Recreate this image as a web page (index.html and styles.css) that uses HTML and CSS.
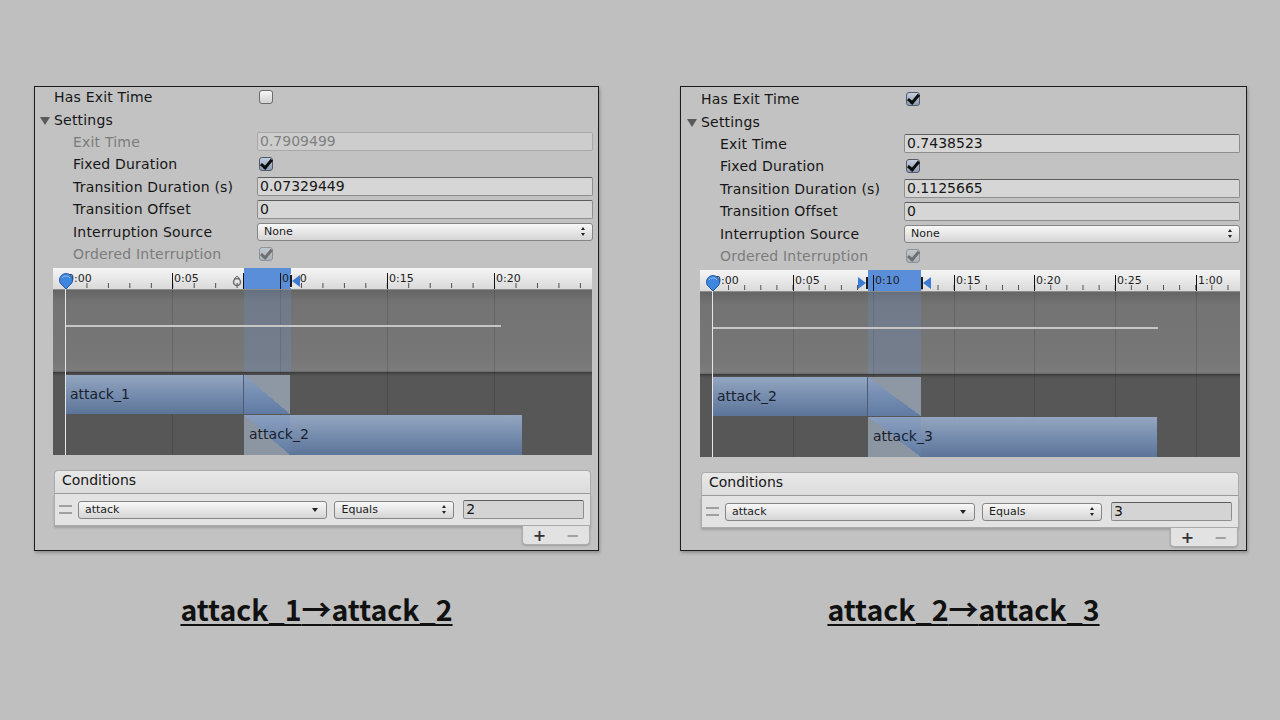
FILE: index.html
```html
<!DOCTYPE html>
<html lang="ja">
<head>
  <meta charset="UTF-8">
  <title>Transition settings</title>
  <link rel="stylesheet" href="styles.css">
</head>
<body>
  <div class="page">

    <div class="shot">
      <div class="panel">
        <div class="row"><span class="label">Has Exit Time</span><span class="check"></span></div>
        <div class="row foldout"><span class="label"><i class="tri"></i>Settings</span></div>
        <div class="row sub off"><span class="label">Exit Time</span><span class="field">0.7909499</span></div>
        <div class="row sub"><span class="label">Fixed Duration</span><span class="check on"></span></div>
        <div class="row sub"><span class="label">Transition Duration (s)</span><span class="field">0.07329449</span></div>
        <div class="row sub"><span class="label">Transition Offset</span><span class="field">0</span></div>
        <div class="row sub"><span class="label">Interruption Source</span><span class="popup">None<i class="updown"></i></span></div>
        <div class="row sub off"><span class="label">Ordered Interruption</span><span class="check on"></span></div>

        <div class="timeline tl-a">
          <div class="ruler"><div class="ticks"></div></div>
          <div class="upper"></div>
          <div class="lower"></div>
          <div class="grid" style="left:119px"></div>
          <div class="grid" style="left:227px"></div>
          <div class="grid" style="left:334px"></div>
          <div class="grid" style="left:441px"></div>
          <div class="xfade-top" style="left:191px;width:47px"></div>
          <div class="xfade" style="left:191px;width:47px"></div>
          <div class="major" style="left:119px"></div><span class="tlabel" style="left:121px">0:05</span>
          <div class="major" style="left:227px"></div><span class="tlabel" style="left:229px">0:10</span>
          <div class="major" style="left:334px"></div><span class="tlabel" style="left:336px">0:15</span>
          <div class="major" style="left:441px"></div><span class="tlabel" style="left:443px">0:20</span>
          <span class="tlabel" style="left:14px">0:00</span>
          <div class="major" style="left:190px"></div>
          <svg class="mark" style="left:179px" width="10" height="14" viewBox="0 0 10 14"><circle cx="5" cy="8" r="3.5" fill="none" stroke="#6f6f6f" stroke-width="1.5"/><path d="M2 5l3-3 3 3" fill="none" stroke="#6f6f6f"/></svg>
          <svg class="mark solid" style="left:237px" width="10" height="14" viewBox="0 0 10 14"><path d="M1 1v12" stroke="#1a1a1a" stroke-width="2"/><path d="M2 7l8-6v12z" fill="#3b7bd4"/></svg>
          <div class="curve" style="width:436px"></div>
          <div class="clip" style="left:12px;top:107px;width:225px"><i class="fade-out" style="width:46px"></i><span>attack_1</span></div>
          <div class="clip" style="left:191px;top:147px;width:278px;height:40px"><i class="fade-in" style="width:46px"></i><span>attack_2</span></div>
          <div class="playhead"></div>
          <svg class="pin" width="16" height="17" viewBox="0 0 16 17"><path d="M8 16L2.2 10A6.5 6.5 0 1 1 13.8 10z" fill="#3f86de" stroke="#1d56a8"/><path d="M4 5a4.5 4 0 0 1 8 0" fill="none" stroke="#8fc0f5"/></svg>
        </div>

        <div class="conditions">
          <div class="cond-head">Conditions</div>
          <div class="cond-body">
            <i class="handle"></i>
            <span class="popup param">attack<i class="down"></i></span>
            <span class="popup mode">Equals<i class="updown"></i></span>
            <span class="field value">2</span>
          </div>
          <div class="cond-foot"><b>+</b><b class="dim">−</b></div>
        </div>
      </div>
      <div class="caption">attack_1<span class="arrow">→</span>attack_2</div>
    </div>

    <div class="shot shot-b">
      <div class="panel panel-b">
        <div class="row"><span class="label">Has Exit Time</span><span class="check on"></span></div>
        <div class="row foldout"><span class="label"><i class="tri"></i>Settings</span></div>
        <div class="row sub"><span class="label">Exit Time</span><span class="field">0.7438523</span></div>
        <div class="row sub"><span class="label">Fixed Duration</span><span class="check on"></span></div>
        <div class="row sub"><span class="label">Transition Duration (s)</span><span class="field">0.1125665</span></div>
        <div class="row sub"><span class="label">Transition Offset</span><span class="field">0</span></div>
        <div class="row sub"><span class="label">Interruption Source</span><span class="popup">None<i class="updown"></i></span></div>
        <div class="row sub off"><span class="label">Ordered Interruption</span><span class="check on"></span></div>

        <div class="timeline tl-b">
          <div class="ruler"><div class="ticks"></div></div>
          <div class="upper"></div>
          <div class="lower"></div>
          <div class="grid" style="left:93px"></div>
          <div class="grid" style="left:173px"></div>
          <div class="grid" style="left:254px"></div>
          <div class="grid" style="left:334px"></div>
          <div class="grid" style="left:415px"></div>
          <div class="grid" style="left:496px"></div>
          <div class="xfade-top" style="left:168px;width:53px"></div>
          <div class="xfade" style="left:168px;width:53px"></div>
          <div class="major" style="left:93px"></div><span class="tlabel" style="left:95px">0:05</span>
          <div class="major" style="left:173px"></div><span class="tlabel" style="left:175px">0:10</span>
          <div class="major" style="left:254px"></div><span class="tlabel" style="left:256px">0:15</span>
          <div class="major" style="left:334px"></div><span class="tlabel" style="left:336px">0:20</span>
          <div class="major" style="left:415px"></div><span class="tlabel" style="left:417px">0:25</span>
          <div class="major" style="left:496px"></div><span class="tlabel" style="left:498px">1:00</span>
          <span class="tlabel" style="left:14px">0:00</span>
          <svg class="mark" style="left:158px" width="10" height="14" viewBox="0 0 10 14"><path d="M0 1l8 6-8 6z" fill="#3b7bd4"/><path d="M9 1v12" stroke="#1a1a1a" stroke-width="2"/></svg>
          <svg class="mark" style="left:221px" width="10" height="14" viewBox="0 0 10 14"><path d="M1 1v12" stroke="#1a1a1a" stroke-width="2"/><path d="M2 7l8-6v12z" fill="#3b7bd4"/></svg>
          <div class="curve" style="width:446px"></div>
          <div class="clip" style="left:12px;top:107px;width:209px"><i class="fade-out" style="width:53px"></i><span>attack_2</span></div>
          <div class="clip" style="left:168px;top:147px;width:289px;height:40px"><i class="fade-in" style="width:53px"></i><span>attack_3</span></div>
          <div class="playhead"></div>
          <svg class="pin" width="16" height="17" viewBox="0 0 16 17"><path d="M8 16L2.2 10A6.5 6.5 0 1 1 13.8 10z" fill="#3f86de" stroke="#1d56a8"/><path d="M4 5a4.5 4 0 0 1 8 0" fill="none" stroke="#8fc0f5"/></svg>
        </div>

        <div class="conditions">
          <div class="cond-head">Conditions</div>
          <div class="cond-body">
            <i class="handle"></i>
            <span class="popup param">attack<i class="down"></i></span>
            <span class="popup mode">Equals<i class="updown"></i></span>
            <span class="field value">3</span>
          </div>
          <div class="cond-foot"><b>+</b><b class="dim">−</b></div>
        </div>
      </div>
      <div class="caption">attack_2<span class="arrow">→</span>attack_3</div>
    </div>

  </div>
</body>
</html>
```

FILE: styles.css
```css
body { margin: 0; background: #bfbfbf; font-family: "DejaVu Sans", sans-serif; font-size: 14px; color: #161616; }
.page { display: flex; gap: 81px; padding: 86px 0 0 34px; }
.shot { width: 565px; display: flex; flex-direction: column; }
.shot-b { width: 567px; }

.panel { height: 465px; box-sizing: border-box; border: 1px solid #1c1c1c; background: #c2c2c2; box-shadow: 1px 2px 3px rgba(0,0,0,0.25); padding-top: 0; }
.panel > .row:first-child { margin-top: -1px; }
.panel-b { padding: 2px 0 0 1px; }

.row { display: grid; grid-template-columns: 222px 336px; align-items: center; height: 22.4px; }
.label { padding-left: 19px; white-space: nowrap; letter-spacing: 0.2px; }
.sub .label { padding-left: 38px; }
.off .label { color: #7c7c7c; }
.foldout .label { position: relative; }
.tri { position: absolute; left: 5px; top: 5px; width: 0; height: 0; border-left: 5px solid transparent; border-right: 5px solid transparent; border-top: 8px solid #5a5a5a; }

.field { display: block; height: 19px; box-sizing: border-box; border: 1px solid #8e8e8e; border-top-color: #5c5c5c; border-radius: 2px; background: #d6d6d6; padding-left: 2px; line-height: 17px; font-size: 14px; }
.off .field { color: #808080; border-color: #a9a9a9; background: #cdcdcd; }

.check { display: block; width: 14px; height: 14px; box-sizing: border-box; margin-left: 2px; border: 1px solid #6c6c6c; border-radius: 3px; background: linear-gradient(#f6f6f6, #d2d2d2); position: relative; }
.check.on { background: linear-gradient(#c3cedd, #8d9cb3); border-color: #505a68; }
.check.on::after { content: ""; position: absolute; left: 3px; top: -1px; width: 4px; height: 9px; border: solid #0c0c0c; border-width: 0 3px 3px 0; transform: rotate(40deg); }
.off .check { opacity: 0.45; }

.popup { display: flex; align-items: center; justify-content: space-between; height: 18px; box-sizing: border-box; border: 1px solid #858585; border-radius: 3px; background: linear-gradient(#f8f8f8, #d5d5d5); font-size: 11px; padding: 0 6px 0 6px; color: #1c1c1c; }
.updown { width: 5px; height: 9px; position: relative; }
.updown::before, .updown::after { content: ""; position: absolute; left: 0; border-left: 2.5px solid transparent; border-right: 2.5px solid transparent; }
.updown::before { top: 0; border-bottom: 3.5px solid #222; }
.updown::after { bottom: 0; border-top: 3.5px solid #222; }
.down { width: 0; height: 0; border-left: 3px solid transparent; border-right: 3px solid transparent; border-top: 4px solid #222; margin-right: 2px; }

.timeline { position: relative; height: 187px; margin: 3px 6px 0 18px; overflow: hidden; background: #575757; }
.ruler { position: absolute; left: 0; right: 0; top: 0; height: 22px; box-sizing: border-box; background: linear-gradient(#f5f5f5, #dadada); border-bottom: 1px solid #8c8c8c; }
.ticks { position: absolute; left: 12px; right: 0; bottom: 1px; height: 5px; background-image: linear-gradient(to right, #4a4a4a 1px, transparent 1px); background-repeat: repeat-x; }
.tl-a .ticks { background-size: 21.46px 5px; }
.tl-b .ticks { background-size: 16.12px 5px; }
.upper { position: absolute; left: 0; right: 0; top: 22px; height: 82px; background: linear-gradient(#656565, #737373 12px, #777 70px, #7c7c7c 80px, #6a6a6a); }
.lower { position: absolute; left: 0; right: 0; top: 104px; bottom: 0; background: linear-gradient(#383838, #4c4c4c 2px, #575757 4px); }
.grid { position: absolute; top: 22px; bottom: 0; width: 1px; background: rgba(0,0,0,0.13); }
.major { position: absolute; top: 5px; height: 16px; width: 1px; background: #111; }
.tlabel { position: absolute; top: 5px; font-size: 11px; line-height: 12px; color: #1e1e1e; }
.xfade-top { position: absolute; top: 0; height: 21px; background: #5a8ed9; }
.xfade { position: absolute; top: 22px; height: 82px; background: rgba(110,150,220,0.22); }
.mark { position: absolute; top: 6px; }
.mark.solid { background: #e6e6e6; }
.curve { position: absolute; left: 12px; top: 57px; height: 2px; background: #c6c6c6; }

.clip { position: absolute; height: 39px; box-sizing: border-box; padding-left: 5px; line-height: 39px; color: #18212f; background: linear-gradient(#94a6c0, #7188aa 60%, #5c7498); }
.clip span { position: relative; }
.fade-out, .fade-in { position: absolute; top: 0; bottom: 0; }
.fade-out { right: 0; background: linear-gradient(to top right, rgba(110,140,190,0.25) 50%, #8e97a4 50%); border-left: 1px solid #4c5c74; }
.fade-in { left: 0; background: linear-gradient(to top right, #8c95a2 50%, rgba(110,140,190,0.25) 50%); }

.playhead { position: absolute; left: 12px; top: 18px; bottom: 0; width: 1px; background: #e6e6e6; }
.pin { position: absolute; left: 5px; top: 5px; }

.conditions { margin: 15px 7px 0 19px; display: flex; flex-direction: column; }
.cond-head { height: 24px; box-sizing: border-box; padding-left: 7px; line-height: 19px; border: 1px solid #ababab; border-bottom-color: #9a9a9a; border-radius: 4px 4px 0 0; background: linear-gradient(#e8e8e8, #dcdcdc); }
.cond-body { display: flex; align-items: center; height: 32px; box-sizing: border-box; padding: 0 6px 0 4px; border: 1px solid #ababab; border-top: none; background: #e3e3e3; box-shadow: 0 2px 2px rgba(0,0,0,0.18); }
.handle { width: 13px; height: 5px; border-top: 2px solid #a0a0a0; border-bottom: 2px solid #a0a0a0; margin-right: 6px; }
.param { width: 250px; }
.mode { width: 120px; margin-left: 7px; }
.value { width: 121px; height: 19px; margin-left: 9px; background: #d4d4d4; }
.cond-foot { align-self: flex-end; display: flex; justify-content: space-around; align-items: center; width: 68px; height: 19px; box-sizing: border-box; margin-right: 1px; border: 1px solid #ababab; border-top: none; border-radius: 0 0 4px 4px; background: #e2e2e2; box-shadow: 0 1px 2px rgba(0,0,0,0.18); font-size: 16px; color: #333; }
.cond-foot .dim { color: #a0a0a0; }

.caption { margin-top: 37px; text-align: center; line-height: 40px; font-family: "Noto Sans CJK JP", sans-serif; font-weight: bold; font-size: 28.5px; text-decoration: underline; text-underline-offset: 3px; color: #111; }
.arrow { font-size: 30px; }
```
